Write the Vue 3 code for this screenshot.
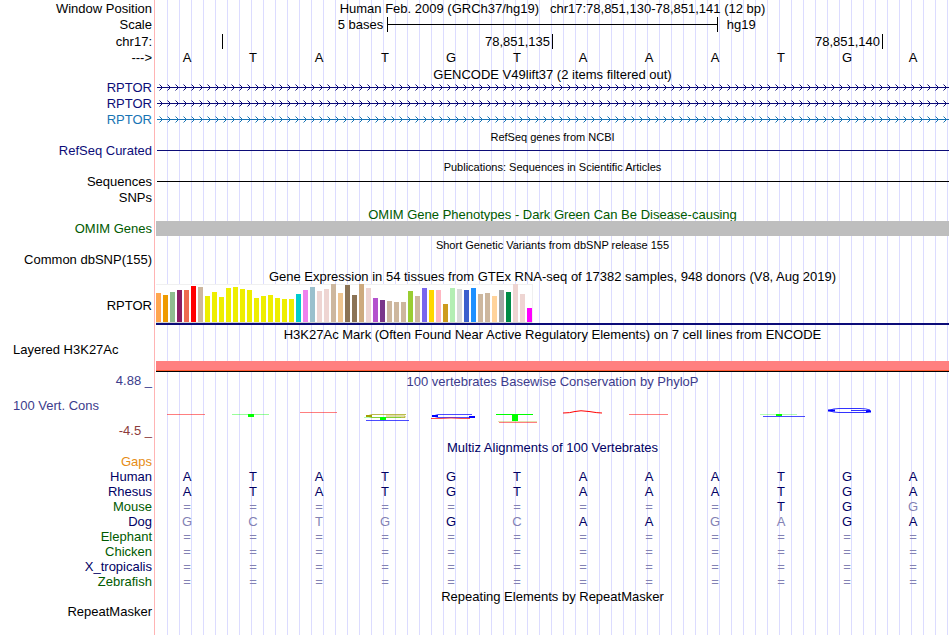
<template>
  <main class="browser">
    <div class="row medium">
      <span class="label">Window Position</span>
      <div class="title">
        Human Feb. 2009 (GRCh37/hg19) &nbsp; chr17:78,851,130-78,851,141 (12 bp)
      </div>
    </div>
    <div class="row header">
      <span class="label">Scale</span>
      <div class="scale">
        <span class="scale-size">5 bases</span>
        <span class="scale-bar"><i></i></span>
        <span class="scale-db">hg19</span>
      </div>
    </div>
    <div class="row header">
      <span class="label">chr17:</span>
      <div class="ruler">
        <span class="tick"></span>
        <span class="tick wide">78,851,135</span>
        <span class="tick wide">78,851,140</span>
      </div>
    </div>
    <div class="row">
      <span class="label">---&gt;</span>
      <div class="bases">
        <span v-for="(base, i) in sequence" :key="i">{{ base }}</span>
      </div>
    </div>

    <div class="row low">
      <div class="title">GENCODE V49lift37 (2 items filtered out)</div>
    </div>
    <div
      v-for="(gene, i) in genes"
      :key="'gene' + i"
      class="row medium gene"
      :class="gene.color"
    >
      <span class="label">{{ gene.name }}</span>
      <svg class="intron" width="100%" height="16">
        <defs>
          <pattern
            :id="'arrows' + i"
            width="8"
            height="16"
            patternUnits="userSpaceOnUse"
          >
            <path
              d="M2.5 4.5L5.5 7.5L2.5 10.5"
              fill="none"
              stroke="currentColor"
            />
          </pattern>
        </defs>
        <rect y="7" width="100%" height="1" fill="currentColor" />
        <rect width="100%" height="16" :fill="'url(#arrows' + i + ')'" />
      </svg>
    </div>

    <div class="row low">
      <div class="title small">RefSeq genes from NCBI</div>
    </div>
    <div class="row navy">
      <span class="label">RefSeq Curated</span>
      <div class="line"></div>
    </div>

    <div class="row medium low">
      <div class="title small">
        Publications: Sequences in Scientific Articles
      </div>
    </div>
    <div class="row">
      <span class="label">Sequences</span>
      <div class="line"></div>
    </div>
    <div class="row medium">
      <span class="label">SNPs</span>
    </div>

    <div class="row medium low green">
      <div class="title">
        OMIM Gene Phenotypes - Dark Green Can Be Disease-causing
      </div>
    </div>
    <div class="row green">
      <span class="label">OMIM Genes</span>
      <div class="omim"></div>
    </div>

    <div class="row medium low">
      <div class="title small">
        Short Genetic Variants from dbSNP release 155
      </div>
    </div>
    <div class="row">
      <span class="label">Common dbSNP(155)</span>
    </div>

    <div class="row header low">
      <div class="title">
        Gene Expression in 54 tissues from GTEx RNA-seq of 17382 samples, 948
        donors (V8, Aug 2019)
      </div>
    </div>
    <div class="row expression">
      <span class="label">RPTOR</span>
      <div class="gtex">
        <div class="chart">
          <span
            v-for="(bar, i) in tissues"
            :key="i"
            :style="{ height: bar[0] + 'px', backgroundColor: bar[1] }"
          ></span>
        </div>
      </div>
    </div>

    <div class="row">
      <div class="title">
        H3K27Ac Mark (Often Found Near Active Regulatory Elements) on 7 cell
        lines from ENCODE
      </div>
    </div>
    <div class="row histone">
      <span class="label left">Layered H3K27Ac</span>
      <div class="signal"></div>
    </div>

    <div class="row header low violet">
      <span class="label">4.88 _</span>
      <div class="title">100 vertebrates Basewise Conservation by PhyloP</div>
    </div>
    <div class="row conservation">
      <div class="side">
        <span class="label left violet">100 Vert. Cons</span>
        <span class="label maroon">-4.5 _</span>
      </div>
      <div class="bases">
        <svg v-for="(logo, i) in logos" :key="i" viewBox="0 0 66 51" height="51">
          <path
            v-for="(mark, j) in logo"
            :key="j"
            :d="mark.d"
            :stroke="mark.color"
            :stroke-width="mark.width || 1"
            :opacity="mark.opacity || 1"
            fill="none"
          />
        </svg>
      </div>
    </div>

    <div class="row short dark">
      <div class="title">Multiz Alignments of 100 Vertebrates</div>
    </div>
    <div
      v-for="item in species"
      :key="item.name"
      class="row"
      :class="item.color"
    >
      <span class="label">{{ item.name }}</span>
      <div class="bases aligned">
        <span
          v-for="(base, i) in item.bases"
          :key="i"
          :class="{ mismatch: base !== sequence[i] }"
          >{{ base }}</span
        >
      </div>
    </div>

    <div class="row">
      <div class="title">Repeating Elements by RepeatMasker</div>
    </div>
    <div class="row">
      <span class="label">RepeatMasker</span>
    </div>
  </main>
</template>

<script setup>
const sequence = "ATATGTAAATGA";

const genes = [
  { name: "RPTOR", color: "navy" },
  { name: "RPTOR", color: "navy" },
  { name: "RPTOR", color: "blue" },
];

const species = [
  { name: "Gaps", color: "orange", bases: "" },
  { name: "Human", color: "dark", bases: "ATATGTAAATGA" },
  { name: "Rhesus", color: "dark", bases: "ATATGTAAATGA" },
  { name: "Mouse", color: "green", bases: "=========TGG" },
  { name: "Dog", color: "dark", bases: "GCTGGCAAGAGA" },
  { name: "Elephant", color: "green", bases: "============" },
  { name: "Chicken", color: "green", bases: "============" },
  { name: "X_tropicalis", color: "dark", bases: "============" },
  { name: "Zebrafish", color: "green", bases: "============" },
];

// [height, color] for each GTEx tissue
const tissues = [
  [29, "#ffa54f"],
  [27, "#ee9a00"],
  [30, "#8fbc8f"],
  [32, "#8b1c62"],
  [32, "#ee6a50"],
  [36, "#ff0000"],
  [35, "#cdb79e"],
  [26, "#eeee00"],
  [30, "#eeee00"],
  [25, "#eeee00"],
  [34, "#eeee00"],
  [35, "#eeee00"],
  [33, "#eeee00"],
  [32, "#eeee00"],
  [24, "#eeee00"],
  [26, "#eeee00"],
  [27, "#eeee00"],
  [24, "#eeee00"],
  [23, "#eeee00"],
  [23, "#eeee00"],
  [28, "#00cdcd"],
  [32, "#ee82ee"],
  [35, "#9ac0cd"],
  [31, "#eed5d2"],
  [33, "#eed5d2"],
  [38, "#cdb79e"],
  [29, "#eec591"],
  [37, "#8b7355"],
  [27, "#8b7355"],
  [38, "#cdaa7d"],
  [34, "#eed5d2"],
  [24, "#b452cd"],
  [22, "#7a378b"],
  [21, "#cdb79e"],
  [20, "#cdb79e"],
  [20, "#cdb79e"],
  [31, "#9acd32"],
  [26, "#cdb79e"],
  [34, "#7a67ee"],
  [32, "#ffd700"],
  [32, "#ffb6c1"],
  [18, "#cd9b1d"],
  [34, "#b4eeb4"],
  [33, "#d9d9d9"],
  [32, "#3a5fcd"],
  [34, "#1e90ff"],
  [28, "#cdb79e"],
  [29, "#cdb79e"],
  [26, "#ffd39b"],
  [32, "#a6a6a6"],
  [30, "#008b45"],
  [38, "#eed5d2"],
  [28, "#eed5d2"],
  [14, "#ff00ff"],
];

// flattened sequence logo letters, one list per base
const logos = [
  [{ d: "M13 25.5H51", color: "#f00", opacity: 0.5 }],
  [
    { d: "M12 25.5H49", color: "#0f0", opacity: 0.4 },
    { d: "M28 26.5H34", color: "#0f0", width: 3 },
  ],
  [{ d: "M14 23.5H51", color: "#f00", opacity: 0.5 }],
  [
    { d: "M54 25.5H20L15 27L20 28.5H53V27H34", color: "#a0a000", opacity: 0.7 },
    { d: "M14 27H20", color: "#a0a000", width: 2 },
    { d: "M12 28.5H49", color: "#0f0", opacity: 0.3 },
    { d: "M28 29.5H34", color: "#0f0", width: 3 },
    { d: "M14 31.5H57", color: "#00f", opacity: 0.7 },
  ],
  [
    { d: "M54 25.5H20L15 27L20 28.5H56", color: "#00f", opacity: 0.7 },
    { d: "M14 27H20M51 28H57", color: "#00f", width: 2 },
    { d: "M13 29.5H23L33 29L43 29.5H52", color: "#f00", opacity: 0.7 },
  ],
  [
    { d: "M12 25.5H49", color: "#0f0" },
    { d: "M28 28.5H34", color: "#0f0", width: 7 },
    { d: "M14 32.5H53", color: "#a0a000", opacity: 0.3 },
    { d: "M15 33.5H53", color: "#f00", opacity: 0.5 },
  ],
  [{ d: "M13 24Q20 24 25 22.5T39 22.5T52 24", color: "#f00" }],
  [{ d: "M13 25.5H52", color: "#f00", opacity: 0.5 }],
  [],
  [
    { d: "M12 25.5H49", color: "#0f0", opacity: 0.3 },
    { d: "M28 26H34", color: "#0f0", width: 2 },
    { d: "M15 27.5H57", color: "#00f", opacity: 0.7 },
  ],
  [
    { d: "M56 21Q52 19.5 46 19.5H25Q19 19.5 15 21.5Q19 23.5 25 23.5H52L56 22.5V21.5H37", color: "#00f", opacity: 0.8 },
    { d: "M14 21.5H21M52 22.5H57", color: "#00f", width: 2 },
  ],
  [],
];
</script>

<style>
body {
  margin: 0;
}
</style>

<style scoped>
.browser {
  min-height: 100vh;
  box-sizing: border-box;
  padding-right: 1px;
  font-family: "Liberation Sans", Arial, sans-serif;
  font-size: 13px;
  line-height: 15px;
  color: #000;
  white-space: nowrap;
  background-color: #fff;
  background-image:
    linear-gradient(#ffb4b4, #ffb4b4),
    repeating-linear-gradient(
      to right,
      transparent 0 11px,
      #dcdcff 11px 12px
    );
  background-position: 154px 0, 156px 0;
  background-size: 1px 100%, 100% 100%;
  background-repeat: no-repeat;
}

.row {
  display: grid;
  grid-template-columns: 156px minmax(0, 1fr);
  height: 15px;
  align-items: center;
}

.row.short {
  height: 14px;
}

.row.medium {
  height: 16px;
}

.row.header {
  height: 17px;
}

.row.gene {
  align-items: start;
}

.label {
  padding-right: 4px;
  text-align: right;
}

.label.left {
  padding-left: 13px;
  text-align: left;
}

.title {
  grid-column: 2;
  text-align: center;
}

.low .title {
  padding-top: 2px;
}

.small {
  font-size: 11px;
}

.navy {
  color: #0c0c78;
}

.blue {
  color: #1874b4;
}

.green {
  color: #005a00;
}

.dark {
  color: #000064;
}

.violet {
  color: #3c3c8c;
}

.maroon {
  color: #8c3c3c;
}

.orange {
  color: #e68c14;
}

.scale {
  display: grid;
  grid-template-columns: 7fr 10fr 7fr;
  align-items: center;
}

.scale-size {
  padding-right: 4px;
  text-align: right;
}

.scale-bar {
  display: flex;
  align-items: center;
  height: 15px;
  border-left: 1px solid #000;
  border-right: 1px solid #000;
}

.scale-bar i {
  flex: 1;
  height: 1px;
  background-color: #000;
}

.scale-db {
  padding-left: 9px;
}

.ruler {
  display: grid;
  grid-template-columns: repeat(12, 1fr);
  margin-right: 1px;
}

.tick {
  height: 15px;
  margin-right: -1px;
  padding-right: 2px;
  border-right: 1px solid #000;
  text-align: right;
}

.tick.wide {
  grid-column: span 5;
}

.bases {
  display: grid;
  grid-template-columns: repeat(12, 1fr);
  margin: 0 3px 0 -2px;
  text-align: center;
}

.aligned {
  color: #000064;
}

.mismatch {
  color: #8282b4;
}

.intron {
  display: block;
  box-sizing: border-box;
  padding-left: 1px;
}

.line {
  height: 1px;
  margin-left: 1px;
  background-color: currentColor;
}

.omim {
  position: relative;
  height: 15px;
  background-color: #bebebe;
}

.row.expression {
  height: 43px;
}

.gtex {
  align-self: start;
  border-bottom: 2px solid #0c0c78;
}

.chart {
  display: flex;
  align-items: flex-end;
  gap: 2px;
  width: max-content;
  height: 38px;
  background-color: #fff;
  border-bottom: 1px solid #d2d2d2;
  box-shadow: inset 0 1px #f0f0f0, 1px 0 #f0f0f0;
}

.chart span {
  width: 5px;
}

.row.histone {
  height: 30px;
  align-items: stretch;
}

.signal {
  align-self: end;
  height: 10px;
  background-color: #ff8080;
  border-bottom: 1px solid #000;
  box-shadow: inset 0 -1px #ff5a32;
}

.row.conservation {
  height: 51px;
}

.side {
  display: flex;
  flex-direction: column;
  gap: 10px;
  padding-top: 6px;
}

.bases svg {
  display: block;
  width: 100%;
}
</style>
